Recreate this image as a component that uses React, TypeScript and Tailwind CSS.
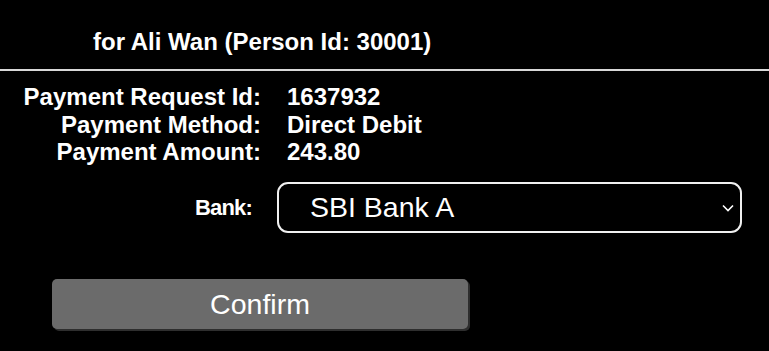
import React from 'react';

const details = [
  { label: 'Payment Request Id:', value: '1637932' },
  { label: 'Payment Method:', value: 'Direct Debit' },
  { label: 'Payment Amount:', value: '243.80' },
];

export default function App() {
  return (
    <div className="h-[351px] w-full overflow-hidden bg-black font-['Liberation_Sans',Arial,sans-serif] text-white">
      <div className="pl-[93px] pt-[30px] text-[24px] font-bold leading-[24px]">
        for Ali Wan (Person Id: 30001)
      </div>
      <div className="mt-[15px] h-[2px] w-full bg-[#d8d8d8]" />

      <div className="mt-[12px] flex flex-col">
        {details.map((row) => (
          <div key={row.label} className="flex text-[24px] font-bold leading-[27.7px]">
            <span className="w-[261px] text-right">{row.label}</span>
            <span className="ml-[26px]">{row.value}</span>
          </div>
        ))}
      </div>

      <div className="mt-[16px] flex items-center">
        <span className="w-[252px] text-right text-[22px] font-bold tracking-[-0.8px]">Bank:</span>
        <div className="relative ml-[25px] h-[51px] w-[465px]">
          <select
            defaultValue="a"
            className="h-full w-full appearance-none rounded-[11px] border-2 border-[#f0f0f0] bg-black pl-[31px] text-[28.5px] text-white outline-none"
          >
            <option value="a">SBI Bank A</option>
            <option value="b">SBI Bank B</option>
          </select>
          <svg
            className="pointer-events-none absolute right-[8px] top-[22px]"
            width="12"
            height="8"
            viewBox="0 0 12 8"
            fill="none"
          >
            <path d="M1 1.5 L6 6.5 L11 1.5" stroke="white" strokeWidth="1.6" />
          </svg>
        </div>
      </div>

      <div className="mt-[46px] pl-[52px]">
        <button
          type="button"
          className="h-[50px] w-[416px] rounded-[5px] bg-[#6b6b6b] text-[28.5px] text-white shadow-[2px_2px_0_#2e2e2e]"
        >
          Confirm
        </button>
      </div>
    </div>
  );
}
